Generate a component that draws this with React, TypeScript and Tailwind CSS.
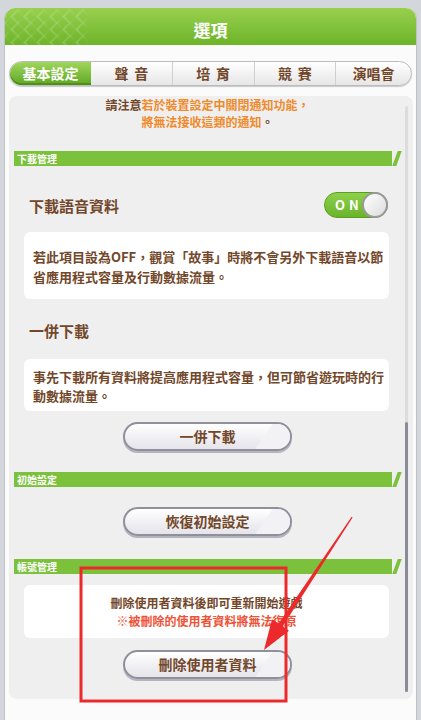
import React from "react";

const brown = "text-[#72472a]";

const SectionBar = ({ label }: { label: string }) => (
  <div className="flex h-[15px] items-stretch">
    <div className="flex flex-1 items-center bg-[#7cc13c] pl-[3px] text-[10px] font-bold leading-none text-white">
      {label}
    </div>
    <div className="ml-[3px] mr-[2px] w-[4px] -skew-x-[20deg] bg-[#7cc13c]" />
  </div>
);

const PillButton = ({ label }: { label: string }) => (
  <div className="flex justify-center">
    <div
      className={`relative flex h-[29px] w-[169px] items-center justify-center overflow-hidden rounded-full border-2 border-[#8f909c] bg-linear-to-b from-white to-[#e4e4ea] text-[14px] font-bold ${brown} shadow-[0_2px_0_#b4b4bf]`}
    >
      <span className="relative z-10">{label}</span>
      <div className="absolute right-[-14px] top-0 h-full w-[40px] -skew-x-[35deg] bg-[#f2f2f5]" />
    </div>
  </div>
);

const tabs = [
  { label: "聲音", wide: true },
  { label: "培育", wide: true },
  { label: "競賽", wide: true },
  { label: "演唱會", wide: false },
];

export default function App() {
  return (
    <div
      className="relative h-[720px] w-[421px] overflow-hidden bg-[#d3d6da]"
      style={{ fontFamily: '"Noto Sans CJK TC", "Noto Sans", sans-serif' }}
    >
      <div className="mx-[4px] mt-[8px] flex h-[712px] flex-col rounded-t-[10px] border-x border-[#bfc2c6] bg-[#fbfbfb]">
        {/* header */}
        <div className="relative flex h-[37px] items-center justify-center overflow-hidden rounded-t-[10px] bg-linear-to-b from-[#98d04e] to-[#6db428] pt-[7px]">
          <svg className="absolute left-0 top-0" width="90" height="37" viewBox="0 0 90 37">
            <defs>
              <linearGradient id="fade" x1="0" x2="1" y1="0" y2="0">
                <stop offset="0" stopColor="#ffffff" stopOpacity="0.18" />
                <stop offset="1" stopColor="#ffffff" stopOpacity="0" />
              </linearGradient>
            </defs>
            {[0, 1, 2, 3, 4, 5, 6].map((i) =>
              [0, 1, 2].map((j) => (
                <path
                  key={`${i}-${j}`}
                  d={`M${i * 13} ${j * 13 + 2} l6.5 6.5 l-6.5 6.5 l-6.5 -6.5 z`}
                  fill="none"
                  stroke="url(#fade)"
                  strokeWidth="2"
                />
              ))
            )}
          </svg>
          <span className="relative text-[17px] font-bold text-white">選項</span>
        </div>

        {/* tabs */}
        <div className="mt-[16px] px-[4px]">
          <div className="flex h-[25px] overflow-hidden rounded-full border border-[#bcbcbc] bg-linear-to-b from-white to-[#e6e6e6] shadow-[0_1px_1px_#c8c8c8]">
            <div className="flex w-[81px] items-center justify-center rounded-l-full bg-linear-to-b from-[#9fd65c] to-[#5ea71e] text-[14px] font-bold text-white shadow-[inset_0_-2px_0_#4f8f18]">
              基本設定
            </div>
            {tabs.map((t, i) => (
              <div
                key={t.label}
                className={`flex flex-1 items-center justify-center text-[14px] font-bold ${brown} ${
                  i > 0 ? "border-l border-[#d0d0d0]" : ""
                } ${t.wide ? "tracking-[6px] pl-[6px]" : ""}`}
              >
                {t.label}
              </div>
            ))}
          </div>
        </div>

        {/* panel */}
        <div className="ml-[4px] mr-[3px] mt-[10px] flex h-[603px] overflow-hidden rounded-[8px] bg-[#efefef]">
          <div className="w-[392px] pl-[5px]">
            <div className="text-center text-[12px] font-bold leading-[17px]">
              <div>
                <span className={brown}>請注意</span>
                <span className="text-[#f08a2a]">若於裝置設定中關閉通知功能，</span>
              </div>
              <div>
                <span className="text-[#f08a2a]">將無法接收這類的通知</span>
                <span className={brown}>。</span>
              </div>
            </div>

            <div className="mt-[21px]">
              <SectionBar label="下載管理" />
            </div>

            <div className="ml-[15px] mr-[13px] mt-[26px] flex h-[26px] items-center justify-between">
              <span className={`text-[15px] font-bold ${brown} pt-[3px]`}>下載語音資料</span>
              <div className="relative flex h-[26px] w-[64px] items-center rounded-full border border-[#5c9e20] bg-linear-to-b from-[#8ed04a] to-[#6ab42a]">
                <span className="pl-[10px] text-[13px] font-bold tracking-[4px] text-white">ON</span>
                <div className="absolute right-[-1px] top-[-1px] h-[26px] w-[26px] rounded-full border-2 border-[#9a9a9a] bg-linear-to-br from-white to-[#dcdcdc]" />
              </div>
            </div>

            <div className={`ml-[10px] mr-[12px] mt-[14px] h-[67px] rounded-[6px] bg-white pl-[9px] pt-[15px] text-[13px] font-bold leading-[20px] ${brown}`}>
              若此項目設為OFF，觀賞「故事」時將不會另外下載語音以節
              <br />
              省應用程式容量及行動數據流量。
            </div>

            <div className={`ml-[15px] mt-[22px] h-[20px] text-[15px] font-bold leading-[20px] ${brown}`}>一併下載</div>

            <div className={`ml-[10px] mr-[12px] mt-[18px] h-[52px] rounded-[6px] bg-white pl-[9px] pt-[8px] text-[13px] font-bold leading-[19px] ${brown}`}>
              事先下載所有資料將提高應用程式容量，但可節省遊玩時的行
              <br />
              動數據流量。
            </div>

            <div className="mt-[11px]">
              <PillButton label="一併下載" />
            </div>

            <div className="mt-[21px]">
              <SectionBar label="初始設定" />
            </div>

            <div className="mt-[20px]">
              <PillButton label="恢復初始設定" />
            </div>

            <div className="mt-[23px]">
              <SectionBar label="帳號管理" />
            </div>

            <div className="ml-[10px] mr-[12px] mt-[11px] h-[53px] rounded-[6px] bg-white pt-[9px] text-center text-[12px] font-bold leading-[18px]">
              <div className={brown}>刪除使用者資料後即可重新開始遊戲</div>
              <div className="text-[#ef5236]">※被刪除的使用者資料將無法復原</div>
            </div>

            <div className="mt-[12px]">
              <PillButton label="刪除使用者資料" />
            </div>
          </div>

          {/* scrollbar */}
          <div className="ml-[4px] mt-[10px] flex h-[586px] w-[3px] flex-col rounded-full bg-[#dcdcdc]">
            <div className="mt-[316px] h-[270px] rounded-full bg-[#8a8b96]" />
          </div>
        </div>
      </div>

      {/* annotation */}
      <svg className="pointer-events-none absolute left-0 top-0" width="421" height="720" viewBox="0 0 421 720">
        <rect x="81" y="568" width="205" height="133" fill="none" stroke="#ec2a2c" strokeWidth="3" />
        <polygon
          points="351.6,516.7 352.6,517.4 282.6,626.4 289,630.7 264,650 272,619.3 278.6,623.6"
          fill="#ec2a2c"
        />
      </svg>
    </div>
  );
}
